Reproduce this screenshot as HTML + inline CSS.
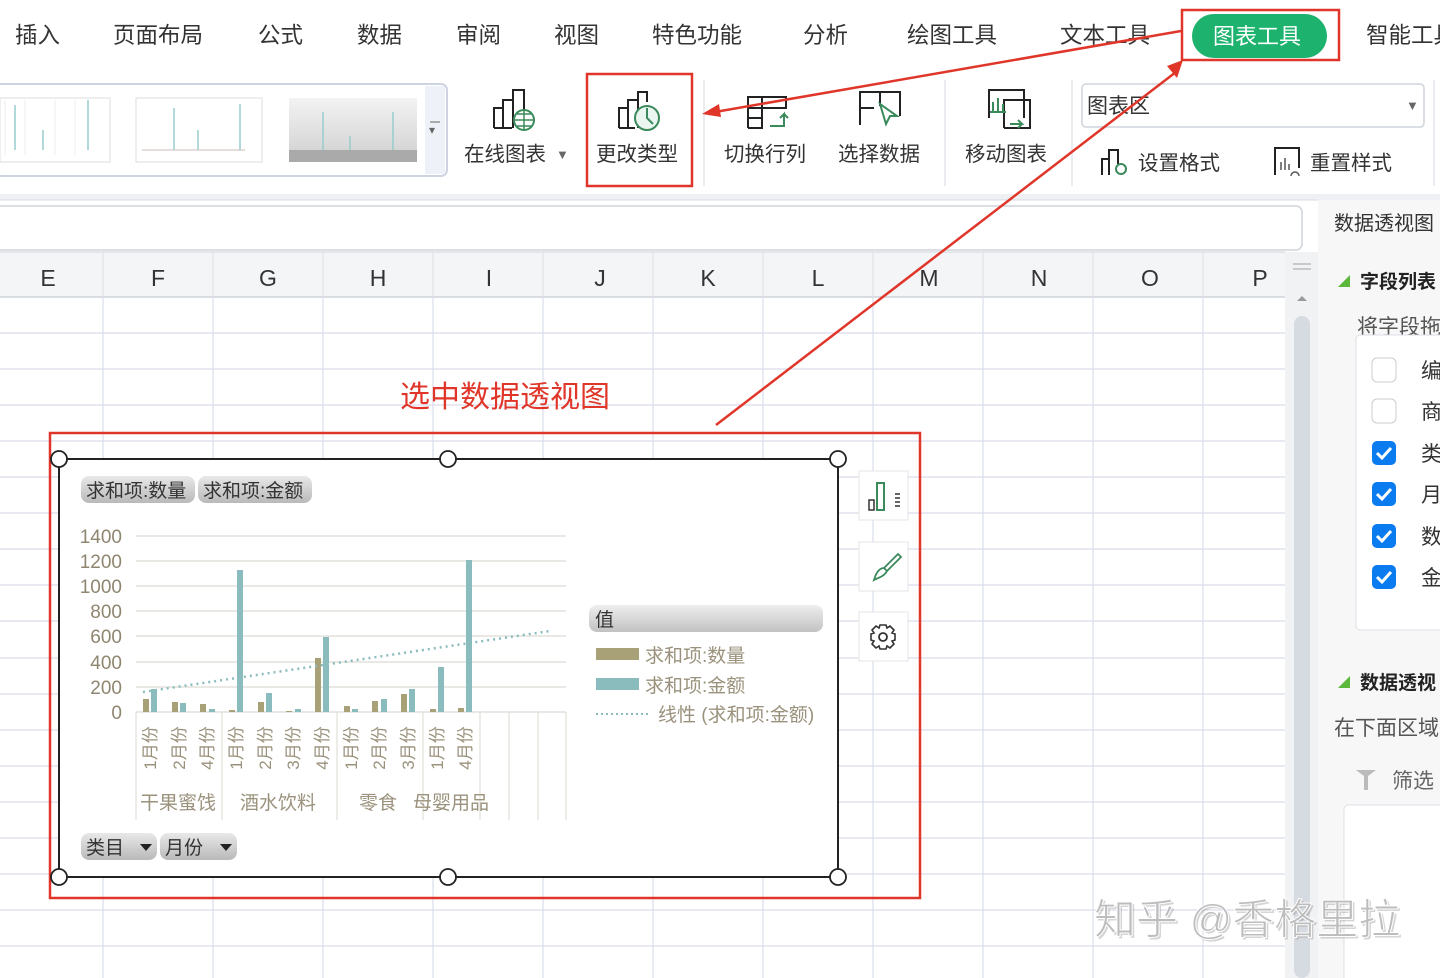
<!DOCTYPE html>
<html><head><meta charset="utf-8">
<style>
html,body{margin:0;padding:0;width:1440px;height:978px;overflow:hidden;background:#fff;}
svg{display:block}
text{font-family:"Liberation Sans","Noto Sans CJK SC",sans-serif;}
.s{font-family:"Noto Serif CJK SC","Liberation Serif",serif;}
</style></head><body>
<svg width="1440" height="978" viewBox="0 0 1440 978" xmlns="http://www.w3.org/2000/svg">
<defs>
<linearGradient id="gb" x1="0" y1="0" x2="0" y2="1"><stop offset="0" stop-color="#e8e8e8"/><stop offset="1" stop-color="#b9b9b9"/></linearGradient>
<linearGradient id="gv" x1="0" y1="0" x2="0" y2="1"><stop offset="0" stop-color="#eee"/><stop offset="1" stop-color="#c2c2c2"/></linearGradient>
<linearGradient id="th" x1="0" y1="0" x2="0" y2="1"><stop offset="0" stop-color="#f3f3f3"/><stop offset="1" stop-color="#cfcfcf"/></linearGradient>
</defs>
<!-- menu -->
<g font-size="22.5" fill="#333">
<text x="15" y="43">插入</text><text x="113" y="43">页面布局</text><text x="258" y="43">公式</text>
<text x="357" y="43">数据</text><text x="456" y="43">审阅</text><text x="554" y="43">视图</text>
<text x="652" y="43">特色功能</text><text x="803" y="43">分析</text><text x="907" y="43">绘图工具</text>
<text x="1060" y="43">文本工具</text><text x="1366" y="43">智能工具</text>
</g>
<rect x="1192" y="14" width="135" height="44" rx="22" fill="#1db36e"/>
<text x="1213" y="44" font-size="22" fill="#fff">图表工具</text>
<rect x="1182" y="10" width="157" height="50" fill="none" stroke="#e0362a" stroke-width="2.5"/>
<!-- ribbon gallery -->
<rect x="-5" y="84" width="452" height="92" rx="6" fill="#fff" stroke="#cdd3e0" stroke-width="2"/>
<rect x="425" y="86" width="20" height="88" fill="#eef1f7"/>
<text x="429" y="134" font-size="12" fill="#666">▾</text><line x1="430" y1="122" x2="440" y2="122" stroke="#666"/>
<g>
<rect x="0" y="98" width="110" height="64" fill="#fff" stroke="#ddd"/>
<g stroke="#9cc" stroke-width="1.5"><line x1="15" y1="150" x2="15" y2="105"/><line x1="43" y1="150" x2="43" y2="130"/><line x1="88" y1="150" x2="88" y2="100"/></g>
<g stroke="#eee"><line x1="5" y1="100" x2="5" y2="155"/><line x1="25" y1="100" x2="25" y2="155"/><line x1="55" y1="100" x2="55" y2="155"/><line x1="75" y1="100" x2="75" y2="155"/></g>
<rect x="136" y="98" width="126" height="64" fill="#fff" stroke="#ddd"/>
<g stroke="#9cc" stroke-width="1.5"><line x1="174" y1="150" x2="174" y2="108"/><line x1="198" y1="150" x2="198" y2="130"/><line x1="240" y1="150" x2="240" y2="104"/></g>
<line x1="142" y1="150" x2="245" y2="150" stroke="#cbb"/>
<rect x="289" y="98" width="128" height="64" fill="url(#th)"/>
<g stroke="#9cc" stroke-width="1.5"><line x1="323" y1="150" x2="323" y2="112"/><line x1="350" y1="150" x2="350" y2="136"/><line x1="393" y1="150" x2="393" y2="112"/></g>
<rect x="289" y="150" width="128" height="12" fill="#aaa"/>
</g>
<!-- ribbon buttons -->
<g fill="none" stroke="#222" stroke-width="2">
<path d="M494 128V108h9v20M503 128V100h10v28M513 118V90h11v20M494 128h18"/>
<path d="M619 128V108h9v20M628 128V100h10v28M638 112V92h9v10M619 128h16"/>
<path d="M748 128V97h14v31h-14M748 108h14M748 118h14M762 97h24v12M762 108h24"/>
<path d="M860 125V92h40v24M880 92v14M860 108h14"/>
<path d="M989 118V90h35v28"/>
<path d="M1004 128V100h26v28h-26"/>
</g>
<circle cx="524" cy="120" r="10" fill="#fff" stroke="#3a8a5c" stroke-width="2"/><path d="M514 120h20M524 110v20M517 114h14M517 126h14" stroke="#3a8a5c" fill="none" stroke-width="1.5"/>
<circle cx="647" cy="118" r="12" fill="#eaf6ef" stroke="#3a8a5c" stroke-width="2"/><path d="M647 108v10l6 6" stroke="#3a8a5c" fill="none" stroke-width="2"/>
<path d="M770 126h14v-12l-4 4m4-4 4 4" stroke="#3a8a5c" fill="none" stroke-width="2"/>
<path d="M880 104l17 12h-7l-4 8z" fill="#fff" stroke="#3a8a5c" stroke-width="2"/>
<path d="M993 112v-10M998 112v-14M1003 112v-8M990 112h16" stroke="#3a8a5c" stroke-width="2" fill="none"/><path d="M1010 124h12l-4-4m4 4-4 4" stroke="#3a8a5c" fill="none" stroke-width="2"/>
<g font-size="20.5" fill="#333">
<text x="464" y="161">在线图表</text><text x="556" y="159" font-size="13" fill="#666">▼</text>
<text x="596" y="161">更改类型</text>
<text x="724" y="161">切换行列</text><text x="838" y="161">选择数据</text>
<text x="965" y="161">移动图表</text>
<text x="1138" y="170">设置格式</text><text x="1310" y="170">重置样式</text>
</g>
<rect x="587" y="74" width="105" height="112" fill="none" stroke="#e0362a" stroke-width="2.5"/>
<g stroke="#e3e6ec" stroke-width="1.5"><line x1="704" y1="80" x2="704" y2="186"/><line x1="945" y1="80" x2="945" y2="186"/><line x1="1072" y1="80" x2="1072" y2="186"/><line x1="1434" y1="80" x2="1434" y2="186"/></g>
<rect x="1082" y="84" width="342" height="43" rx="4" fill="#fff" stroke="#cfd4dc" stroke-width="1.5"/>
<text x="1087" y="113" font-size="21" fill="#333">图表区</text>
<text x="1406" y="110" font-size="13" fill="#666">▼</text>
<path d="M1102 175v-16h7v16M1109 175v-25h9v14" fill="none" stroke="#222" stroke-width="2"/><circle cx="1121" cy="169" r="5" fill="none" stroke="#3a8a5c" stroke-width="2"/>
<path d="M1275 175v-27h24v20" fill="none" stroke="#222" stroke-width="2"/><path d="M1281 170v-8M1285 170v-12M1289 170v-6M1291 176a4 4 0 0 1 8 0" stroke="#555" fill="none" stroke-width="1.5"/>
<!-- separators / formula bar -->
<rect x="0" y="194" width="1440" height="6" fill="#eef0f3"/>
<line x1="0" y1="200" x2="1318" y2="200" stroke="#d8dbe0"/>
<rect x="-5" y="206" width="1307" height="44" rx="6" fill="#fff" stroke="#cfd3da" stroke-width="1.5"/>
<!-- right panel -->
<rect x="1318" y="200" width="122" height="778" fill="#f7f7f8"/>
<text x="1334" y="230" font-size="20" fill="#333">数据透视图</text>
<path d="M1338 287l12-12v12z" fill="#5cb83a"/>
<text x="1360" y="288" font-size="19" font-weight="bold" fill="#222">字段列表</text>
<text x="1357" y="334" font-size="21" fill="#555">将字段拖</text>
<rect x="1356" y="335" width="100" height="295" rx="4" fill="#fff" stroke="#dcdfe4"/>
<g><rect x="1372" y="358" width="24" height="24" rx="5" fill="#fff" stroke="#ccc"/><rect x="1372" y="399" width="24" height="24" rx="5" fill="#fff" stroke="#ccc"/>
<rect x="1372" y="441" width="24" height="24" rx="5" fill="#0a7cf0"/><rect x="1372" y="482" width="24" height="24" rx="5" fill="#0a7cf0"/>
<rect x="1372" y="524" width="24" height="24" rx="5" fill="#0a7cf0"/><rect x="1372" y="565" width="24" height="24" rx="5" fill="#0a7cf0"/>
<g fill="none" stroke="#fff" stroke-width="3"><path d="M1377 453l5 5 9-10"/><path d="M1377 494l5 5 9-10"/><path d="M1377 536l5 5 9-10"/><path d="M1377 577l5 5 9-10"/></g></g>
<g font-size="21" fill="#333"><text x="1421" y="378">编</text><text x="1421" y="419">商</text><text x="1421" y="461">类</text><text x="1421" y="502">月</text><text x="1421" y="544">数</text><text x="1421" y="585">金</text></g>
<path d="M1338 688l12-12v12z" fill="#5cb83a"/>
<text x="1360" y="689" font-size="19" font-weight="bold" fill="#222">数据透视</text>
<text x="1334" y="735" font-size="21" fill="#555">在下面区域</text>
<path d="M1356 770h20l-8 6v14h-4v-14z" fill="#bbb"/>
<text x="1392" y="788" font-size="21" fill="#666">筛选</text>
<rect x="1344" y="805" width="110" height="180" rx="4" fill="#fff" stroke="#dcdfe4"/>
<!-- scrollbar -->
<rect x="1285" y="252" width="33" height="726" fill="#f1f2f4"/>
<line x1="1293" y1="264" x2="1311" y2="264" stroke="#bbb" stroke-width="1.5"/><line x1="1293" y1="269" x2="1311" y2="269" stroke="#bbb" stroke-width="1.5"/>
<path d="M1297 301l5-5 5 5z" fill="#999"/>
<rect x="1294" y="316" width="16" height="662" rx="8" fill="#d6dae1"/>
<!-- column header -->
<rect x="0" y="252" width="1285" height="45" fill="#f4f5f7"/>
<line x1="0" y1="252" x2="1285" y2="252" stroke="#d0d3d8"/>
<line x1="0" y1="297" x2="1285" y2="297" stroke="#cfd3da" stroke-width="1.5"/>
<g font-size="23" fill="#333" text-anchor="middle">
<text x="48" y="286">E</text><text x="158" y="286">F</text><text x="268" y="286">G</text><text x="378" y="286">H</text>
<text x="489" y="286">I</text><text x="600" y="286">J</text><text x="708" y="286">K</text><text x="818" y="286">L</text>
<text x="929" y="286">M</text><text x="1039" y="286">N</text><text x="1150" y="286">O</text><text x="1260" y="286">P</text>
</g>
<g stroke="#dde0e6"><line x1="103" y1="252" x2="103" y2="297"/><line x1="213" y1="252" x2="213" y2="297"/><line x1="323" y1="252" x2="323" y2="297"/><line x1="433" y1="252" x2="433" y2="297"/><line x1="543" y1="252" x2="543" y2="297"/><line x1="653" y1="252" x2="653" y2="297"/><line x1="763" y1="252" x2="763" y2="297"/><line x1="873" y1="252" x2="873" y2="297"/><line x1="983" y1="252" x2="983" y2="297"/><line x1="1093" y1="252" x2="1093" y2="297"/><line x1="1203" y1="252" x2="1203" y2="297"/></g>
<!-- grid -->
<g stroke="#d9dcec" stroke-width="1.2">
<line x1="103" y1="297" x2="103" y2="978"/><line x1="213" y1="297" x2="213" y2="978"/><line x1="323" y1="297" x2="323" y2="978"/><line x1="433" y1="297" x2="433" y2="978"/><line x1="543" y1="297" x2="543" y2="978"/><line x1="653" y1="297" x2="653" y2="978"/><line x1="763" y1="297" x2="763" y2="978"/><line x1="873" y1="297" x2="873" y2="978"/><line x1="983" y1="297" x2="983" y2="978"/><line x1="1093" y1="297" x2="1093" y2="978"/><line x1="1203" y1="297" x2="1203" y2="978"/>
<line x1="0" y1="333" x2="1285" y2="333"/><line x1="0" y1="369" x2="1285" y2="369"/><line x1="0" y1="405" x2="1285" y2="405"/><line x1="0" y1="441" x2="1285" y2="441"/><line x1="0" y1="477" x2="1285" y2="477"/><line x1="0" y1="513" x2="1285" y2="513"/><line x1="0" y1="549" x2="1285" y2="549"/><line x1="0" y1="585" x2="1285" y2="585"/><line x1="0" y1="621" x2="1285" y2="621"/><line x1="0" y1="658" x2="1285" y2="658"/><line x1="0" y1="694" x2="1285" y2="694"/><line x1="0" y1="730" x2="1285" y2="730"/><line x1="0" y1="766" x2="1285" y2="766"/><line x1="0" y1="802" x2="1285" y2="802"/><line x1="0" y1="838" x2="1285" y2="838"/><line x1="0" y1="874" x2="1285" y2="874"/><line x1="0" y1="910" x2="1285" y2="910"/><line x1="0" y1="946" x2="1285" y2="946"/>
</g>
<!-- annotation -->
<text x="400" y="407" font-size="30" fill="#e0362a">选中数据透视图</text>
<!-- chart -->
<rect x="59" y="459" width="779" height="418" fill="#fff" stroke="#222" stroke-width="2"/>
<rect x="50" y="433" width="870" height="465" fill="none" stroke="#e0362a" stroke-width="2.5"/>
<g><rect x="81" y="476" width="114" height="27" rx="8" fill="url(#gb)"/><rect x="198" y="476" width="114" height="27" rx="8" fill="url(#gb)"/>
<text x="86" y="497" font-size="19" fill="#333">求和项:数量</text><text x="203" y="497" font-size="19" fill="#333">求和项:金额</text>
<rect x="81" y="833" width="76" height="27" rx="8" fill="url(#gb)"/><rect x="160" y="833" width="77" height="27" rx="8" fill="url(#gb)"/>
<text x="86" y="854" font-size="19" fill="#333">类目</text><text x="165" y="854" font-size="19" fill="#333">月份</text>
<path d="M140 844h12l-6 7z M220 844h12l-6 7z" fill="#222"/></g>
<g stroke="#dedbd3" stroke-width="1.2"><line x1="136" y1="536" x2="566" y2="536"/><line x1="136" y1="561" x2="566" y2="561"/><line x1="136" y1="586" x2="566" y2="586"/><line x1="136" y1="611" x2="566" y2="611"/><line x1="136" y1="636" x2="566" y2="636"/><line x1="136" y1="662" x2="566" y2="662"/><line x1="136" y1="687" x2="566" y2="687"/><line x1="136" y1="712" x2="566" y2="712"/></g>
<g font-size="19" fill="#8f8670" text-anchor="end"><text x="122" y="543">1400</text><text x="122" y="568">1200</text><text x="122" y="593">1000</text><text x="122" y="618">800</text><text x="122" y="643">600</text><text x="122" y="669">400</text><text x="122" y="694">200</text><text x="122" y="719">0</text></g>
<g stroke="#e2ded6" stroke-width="1.2"><line x1="136" y1="712" x2="136" y2="820"/><line x1="222" y1="712" x2="222" y2="820"/><line x1="337" y1="712" x2="337" y2="820"/><line x1="423" y1="712" x2="423" y2="820"/><line x1="480" y1="712" x2="480" y2="820"/><line x1="509" y1="712" x2="509" y2="820"/><line x1="538" y1="712" x2="538" y2="820"/><line x1="566" y1="712" x2="566" y2="820"/></g>
<g fill="#a8a077">
<rect x="143" y="699" width="6" height="13"/><rect x="172" y="702" width="6" height="10"/><rect x="200" y="704" width="6" height="8"/><rect x="229" y="710" width="6" height="2"/><rect x="258" y="702" width="6" height="10"/><rect x="286" y="711" width="6" height="1"/><rect x="315" y="658" width="6" height="54"/><rect x="344" y="706" width="6" height="6"/><rect x="372" y="701" width="6" height="11"/><rect x="401" y="694" width="6" height="18"/><rect x="430" y="709" width="6" height="3"/><rect x="458" y="708" width="6" height="4"/>
</g>
<g fill="#8bbcbd">
<rect x="151" y="689" width="6" height="23"/><rect x="180" y="703" width="6" height="9"/><rect x="209" y="709" width="6" height="3"/><rect x="237" y="570" width="6" height="142"/><rect x="266" y="693" width="6" height="19"/><rect x="295" y="709" width="6" height="3"/><rect x="323" y="637" width="6" height="75"/><rect x="352" y="709" width="6" height="3"/><rect x="381" y="699" width="6" height="13"/><rect x="409" y="689" width="6" height="23"/><rect x="438" y="667" width="6" height="45"/><rect x="466" y="560" width="6" height="152"/>
</g>
<line x1="143" y1="692" x2="550" y2="631" stroke="#8bbcbd" stroke-width="2.5" stroke-dasharray="2 4"/>
<g class="s" font-size="17" fill="#9a927c" text-anchor="middle">
<text transform="translate(156,748) rotate(-90)">1月份</text><text transform="translate(185,748) rotate(-90)">2月份</text><text transform="translate(213,748) rotate(-90)">4月份</text><text transform="translate(242,748) rotate(-90)">1月份</text><text transform="translate(271,748) rotate(-90)">2月份</text><text transform="translate(299,748) rotate(-90)">3月份</text><text transform="translate(328,748) rotate(-90)">4月份</text><text transform="translate(357,748) rotate(-90)">1月份</text><text transform="translate(385,748) rotate(-90)">2月份</text><text transform="translate(414,748) rotate(-90)">3月份</text><text transform="translate(443,748) rotate(-90)">1月份</text><text transform="translate(471,748) rotate(-90)">4月份</text>
</g>
<g class="s" font-size="19" fill="#9a927c"><text x="140" y="809">干果蜜饯</text><text x="240" y="809">酒水饮料</text><text x="359" y="809">零食</text><text x="413" y="809">母婴用品</text></g>
<rect x="589" y="605" width="234" height="27" rx="8" fill="url(#gv)"/>
<text x="595" y="626" font-size="19" fill="#333">值</text>
<rect x="596" y="648" width="43" height="12" fill="#a8a077"/><rect x="596" y="678" width="43" height="12" fill="#8bbcbd"/>
<line x1="596" y1="714" x2="650" y2="714" stroke="#8bbcbd" stroke-width="2" stroke-dasharray="2 3"/>
<g class="s" font-size="19" fill="#9a927c"><text x="645" y="662">求和项:数量</text><text x="645" y="692">求和项:金额</text><text x="658" y="721">线性 (求和项:金额)</text></g>
<g fill="#fff" stroke="#222" stroke-width="1.8"><circle cx="59" cy="459" r="8"/><circle cx="448" cy="459" r="8"/><circle cx="838" cy="459" r="8"/><circle cx="59" cy="877" r="8"/><circle cx="448" cy="877" r="8"/><circle cx="838" cy="877" r="8"/></g>
<g fill="#fff" stroke="#e4e4e4"><rect x="859" y="471" width="49" height="49"/><rect x="859" y="542" width="49" height="49"/><rect x="859" y="612" width="49" height="49"/></g>
<path d="M869 510v-10h5v10zM895 494h5M895 498h5M895 502h5M895 506h5" fill="none" stroke="#333" stroke-width="1.5"/>
<rect x="877" y="483" width="7" height="27" fill="none" stroke="#3a8a5c" stroke-width="2"/>
<path d="M898 554l3 3-14 14-3-3zM884 568l3 3c-3 6-10 7-13 9 1-4 4-12 10-12" fill="none" stroke="#3a8a5c" stroke-width="1.8"/>
<circle cx="883" cy="637" r="4" fill="none" stroke="#333" stroke-width="1.8"/>
<path d="M880 625h6l1 3 3-2 4 4-2 3 3 1v6l-3 1 2 3-4 4-3-2-1 3h-6l-1-3-3 2-4-4 2-3-3-1v-6l3-1-2-3 4-4 3 2z" fill="none" stroke="#333" stroke-width="1.6"/>
<!-- arrows -->
<g stroke="#e0362a" stroke-width="2.5" fill="none"><line x1="1181" y1="31" x2="715" y2="112"/><line x1="716" y1="425" x2="1176" y2="72"/></g>
<path d="M702 114l17-10 2 13z" fill="#e0362a"/>
<path d="M1183 60l-6 18-10-12z" fill="#e0362a"/>
<!-- watermark -->
<text x="1096" y="936" font-size="42" fill="#888" opacity="0.35">知乎 @香格里拉</text>
<text x="1094" y="934" font-size="42" fill="#bdbdbd" stroke="#fff" stroke-width="1">知乎 @香格里拉</text>
</svg>
</body></html>
